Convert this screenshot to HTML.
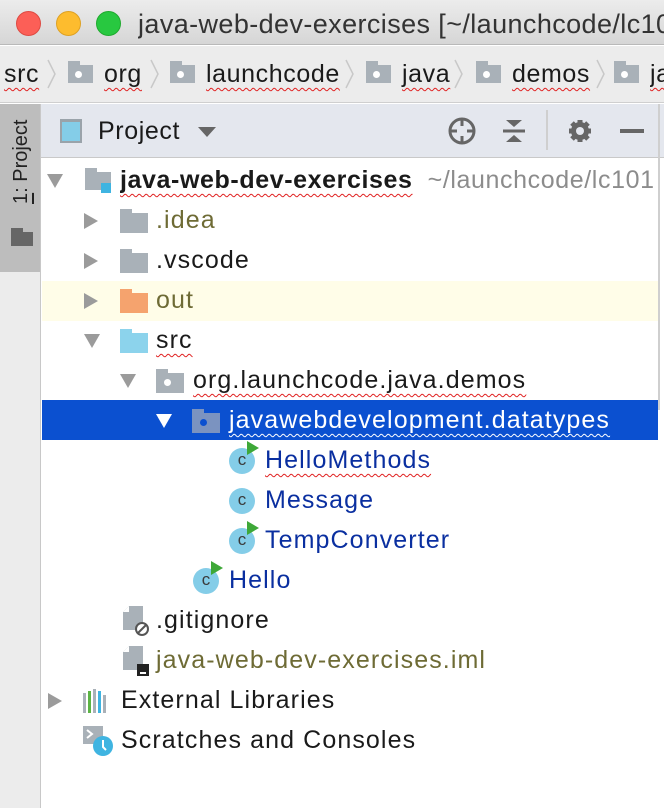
<!DOCTYPE html>
<html><head><meta charset="utf-8"><style>
*{margin:0;padding:0;box-sizing:border-box}
body{width:664px;height:808px;overflow:hidden;background:#fff;font-family:"Liberation Sans",sans-serif;position:relative}
#w{position:absolute;left:0;top:0;width:664px;height:808px;overflow:hidden}
.a{position:absolute}
.t{position:absolute;font-size:25px;letter-spacing:1.1px;line-height:40px;white-space:nowrap;color:#1a1a1a}
.b{position:absolute;font-size:25px;letter-spacing:0.6px;line-height:40px;white-space:nowrap;color:#1a1a1a}
.sq{text-decoration:underline wavy #e02020;text-decoration-thickness:1px;text-underline-offset:5px}
.tri{position:absolute;width:0;height:0}
.tr{border-top:8px solid transparent;border-bottom:8px solid transparent;border-left:14px solid #9b9b9b}
.td{border-left:8px solid transparent;border-right:8px solid transparent;border-top:14px solid #9b9b9b}
.fold{position:absolute;width:28px;height:20px;background:#a9b1b8}
.fold:before{content:"";position:absolute;left:0;top:-4px;width:12px;height:5px;background:inherit}
.pkg:after{content:"";position:absolute;left:8px;top:6px;width:7px;height:7px;border-radius:50%;background:#fff}
.bc:after{left:7px;top:6px;width:7px;height:7px}
.cls{position:absolute;width:26px;height:26px;border-radius:50%;background:#84cde8;font-size:17px;line-height:24px;text-align:center;color:#3a3a3a}
.run:after{content:"";position:absolute;left:18px;top:-7px;border-top:7px solid transparent;border-bottom:7px solid transparent;border-left:12px solid #3ea838}
</style></head><body><div id="w">
<!-- title bar -->
<div class="a" style="left:0;top:0;width:664px;height:45px;background:linear-gradient(#ececec,#d6d6d6);border-bottom:1px solid #b9b9b9"></div>
<div class="a" style="left:16px;top:11px;width:25px;height:25px;border-radius:50%;background:#fc5f57;border:1px solid #de4a42"></div>
<div class="a" style="left:56px;top:11px;width:25px;height:25px;border-radius:50%;background:#fdbc2e;border:1px solid #dea123"></div>
<div class="a" style="left:96px;top:11px;width:25px;height:25px;border-radius:50%;background:#28c840;border:1px solid #1faa2e"></div>
<div class="t" style="left:138px;top:4px;width:526px;overflow:hidden;font-size:27px;letter-spacing:0.4px;color:#333">java-web-dev-exercises [~/launchcode/lc10</div>
<!-- breadcrumb -->
<div class="a" style="left:0;top:46px;width:664px;height:57px;background:#ececec;border-bottom:1px solid #cfcfcf"></div>
<svg class="a" style="left:0;top:46px" width="664" height="57">
<g fill="none" stroke="#c8c8c8" stroke-width="1.5"><path d="M48 14l7 14-7 14M151 14l7 14-7 14M346 14l7 14-7 14M455 14l7 14-7 14M597 14l7 14-7 14"/></g>
</svg>
<div class="fold pkg bc" style="left:68px;top:65px;width:25px;height:18px"></div>
<div class="fold pkg bc" style="left:170px;top:65px;width:25px;height:18px"></div>
<div class="fold pkg bc" style="left:366px;top:65px;width:25px;height:18px"></div>
<div class="fold pkg bc" style="left:476px;top:65px;width:25px;height:18px"></div>
<div class="fold pkg bc" style="left:614px;top:65px;width:25px;height:18px"></div>
<div class="b" style="left:4px;top:54px"><span class="sq">src</span></div>
<div class="b" style="left:104px;top:54px"><span class="sq">org</span></div>
<div class="b" style="left:206px;top:54px"><span class="sq">launchcode</span></div>
<div class="b" style="left:402px;top:54px"><span class="sq">java</span></div>
<div class="b" style="left:512px;top:54px"><span class="sq">demos</span></div>
<div class="b" style="left:650px;top:54px;width:14px;overflow:hidden"><span class="sq">ja</span></div>
<!-- left strip -->
<div class="a" style="left:0;top:104px;width:41px;height:704px;background:#ececec;border-right:1px solid #c8c8c8"></div>
<div class="a" style="left:0;top:104px;width:40px;height:168px;background:#bdbdbd"></div>
<div class="a" style="left:8px;top:120px;width:26px;height:100px;writing-mode:vertical-rl;transform:rotate(180deg);font-size:20px;line-height:26px;color:#222;text-align:right"><u>1</u>: Project</div>
<div class="fold" style="left:11px;top:232px;width:22px;height:14px;background:#666"></div>
<!-- panel header -->
<div class="a" style="left:41px;top:104px;width:623px;height:54px;background:#e4e7ee;border-bottom:1px solid #c9c9c9"></div>
<div class="a" style="left:60px;top:119px;width:22px;height:24px;background:#84cde8;border:2px solid #9aa3aa;border-top-width:3px"></div>
<div class="t" style="left:98px;top:111px;font-size:25px;letter-spacing:0.6px">Project</div>
<div class="tri td" style="left:198px;top:127px;border-top-color:#666;border-left-width:9px;border-right-width:9px;border-top-width:10px"></div>
<svg class="a" style="left:446px;top:115px" width="32" height="32" viewBox="0 0 32 32"><circle cx="16" cy="16" r="12" fill="none" stroke="#666" stroke-width="3"/><path d="M16 3v8M16 21v8M3 16h8M21 16h8" stroke="#666" stroke-width="3"/></svg>
<svg class="a" style="left:500px;top:115px" width="28" height="32" viewBox="0 0 28 32"><path d="M6 5h16l-8 7z M6 27h16l-8-7z" fill="#666"/><path d="M3 16h22" stroke="#666" stroke-width="3"/></svg>
<div class="a" style="left:546px;top:110px;width:2px;height:40px;background:#cfcfcf"></div>
<svg class="a" style="left:564px;top:115px" width="32" height="32" viewBox="0 0 32 32"><g fill="#666"><circle cx="16" cy="16" r="9"/><g stroke="#666" stroke-width="5"><path d="M16 5v22M5 16h22M8 8l16 16M24 8 8 24"/></g></g><circle cx="16" cy="16" r="4" fill="#e4e7ee"/></svg>
<div class="a" style="left:620px;top:129px;width:24px;height:4px;background:#666"></div>
<div class="a" style="left:658px;top:104px;width:2px;height:306px;background:#cfcfcf"></div>
<!-- rows -->
<div class="a" style="left:42px;top:281px;width:616px;height:40px;background:#fffde8"></div>
<div class="a" style="left:42px;top:400px;width:616px;height:40px;background:#0b50d0"></div>

<div class="tri td" style="left:47px;top:174px"></div>
<div class="fold" style="left:85px;top:172px;width:26px;height:18px"></div>
<div class="a" style="left:101px;top:183px;width:10px;height:10px;background:#3fb4e1"></div>
<div class="t" style="left:120px;top:160px;width:538px;overflow:hidden;font-weight:bold;letter-spacing:0.6px"><span class="sq">java-web-dev-exercises</span><span style="font-weight:normal;color:#8c8c8c">&nbsp;&nbsp;~/launchcode/lc101</span></div>

<div class="tri tr" style="left:84px;top:213px"></div>
<div class="fold" style="left:120px;top:213px"></div>
<div class="t" style="left:156px;top:200px;color:#6e6b35">.idea</div>

<div class="tri tr" style="left:84px;top:253px"></div>
<div class="fold" style="left:120px;top:253px"></div>
<div class="t" style="left:156px;top:240px">.vscode</div>

<div class="tri tr" style="left:84px;top:293px"></div>
<div class="fold" style="left:120px;top:293px;background:#f5a36e"></div>
<div class="t" style="left:156px;top:280px;color:#6e6b35">out</div>

<div class="tri td" style="left:84px;top:334px"></div>
<div class="fold" style="left:120px;top:333px;background:#8cd3ec"></div>
<div class="t" style="left:156px;top:320px"><span class="sq">src</span></div>

<div class="tri td" style="left:120px;top:374px"></div>
<div class="fold pkg" style="left:156px;top:373px"></div>
<div class="t" style="left:193px;top:360px"><span class="sq">org.launchcode.java.demos</span></div>

<div class="tri td" style="left:156px;top:414px;border-top-color:#fff"></div>
<div class="fold" style="left:192px;top:413px;background:#7b93c0"></div>
<div class="a" style="left:200px;top:419px;width:7px;height:7px;border-radius:50%;background:#0b50d0"></div>
<div class="t" style="left:229px;top:400px;color:#fff"><span style="text-decoration:underline wavy #fff;text-decoration-thickness:1px;text-underline-offset:5px">javawebdevelopment.datatypes</span></div>

<div class="cls run" style="left:229px;top:448px">c</div>
<div class="t" style="left:265px;top:440px;color:#0a2fa0"><span class="sq">HelloMethods</span></div>
<div class="cls" style="left:229px;top:488px">c</div>
<div class="t" style="left:265px;top:480px;color:#0a2fa0">Message</div>
<div class="cls run" style="left:229px;top:528px">c</div>
<div class="t" style="left:265px;top:520px;color:#0a2fa0">TempConverter</div>
<div class="cls run" style="left:193px;top:568px">c</div>
<div class="t" style="left:229px;top:560px;color:#0a2fa0">Hello</div>

<svg class="a" style="left:123px;top:606px" width="28" height="32" viewBox="0 0 28 32"><path d="M6 0h14v24H0V6z" fill="#a9b1b8"/><path d="M0 6 6 0v6z" fill="#fff"/><circle cx="19" cy="23" r="6" fill="#fff" stroke="#555" stroke-width="2"/><path d="M15 27 23 19" stroke="#555" stroke-width="2"/></svg>
<div class="t" style="left:156px;top:600px">.gitignore</div>
<svg class="a" style="left:123px;top:646px" width="28" height="32" viewBox="0 0 28 32"><path d="M6 0h14v24H0V6z" fill="#a9b1b8"/><path d="M0 6 6 0v6z" fill="#fff"/><rect x="14" y="18" width="12" height="12" fill="#222"/><rect x="17" y="26" width="6" height="2" fill="#fff"/></svg>
<div class="t" style="left:156px;top:640px;color:#6e6b35">java-web-dev-exercises.iml</div>

<div class="tri tr" style="left:48px;top:693px"></div>
<svg class="a" style="left:83px;top:689px" width="28" height="24" viewBox="0 0 28 24"><rect x="0" y="4" width="3" height="20" fill="#a9b1b8"/><rect x="5" y="2" width="3" height="22" fill="#5cb445"/><rect x="10" y="0" width="3" height="24" fill="#a9b1b8"/><rect x="15" y="2" width="3" height="22" fill="#3fb4e1"/><rect x="20" y="6" width="3" height="18" fill="#a9b1b8"/></svg>
<div class="t" style="left:121px;top:680px">External Libraries</div>
<svg class="a" style="left:83px;top:726px" width="32" height="32" viewBox="0 0 32 32"><rect x="0" y="0" width="20" height="18" fill="#a9b1b8"/><path d="M4 4l5 4-5 4" stroke="#fff" stroke-width="2" fill="none"/><circle cx="20" cy="20" r="10" fill="#3fb4e1"/><path d="M20 14v7l3 3" stroke="#fff" stroke-width="2" fill="none"/></svg>
<div class="t" style="left:121px;top:720px">Scratches and Consoles</div>
</div></body></html>
